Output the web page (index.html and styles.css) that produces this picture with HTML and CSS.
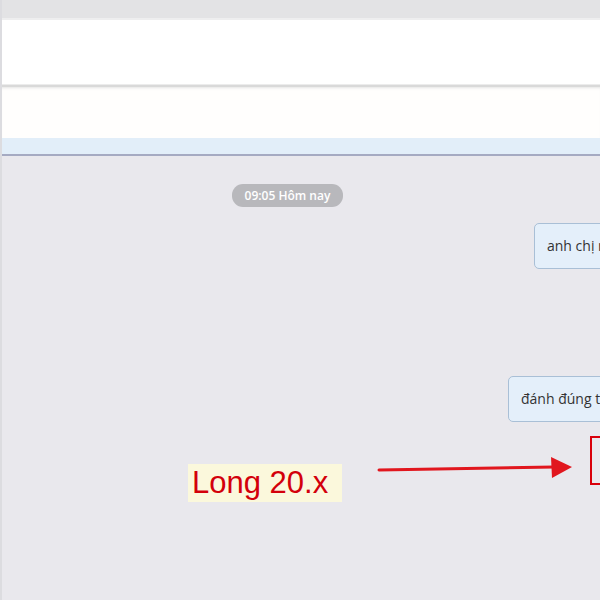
FILE: index.html
```html
<!DOCTYPE html>
<html lang="vi">
<head>
    <meta charset="UTF-8">
    <meta name="viewport" content="width=device-width, initial-scale=1.0">
    <title>Chat</title>
    <link rel="stylesheet" href="styles.css">
</head>
<body>
    <div class="app">
        <div class="topbar"></div>
        <div class="header"></div>
        <div class="subheader"></div>
        <div class="tabstrip"></div>

        <div class="chat">
            <div class="stamp-row">
                <span class="stamp">09:05 Hôm nay</span>
            </div>
            <div class="msg msg-first">
                <div class="bubble">anh chị nhập đúng tên giúp em</div>
            </div>
            <div class="msg msg-second">
                <div class="bubble">đánh đúng tên nhé</div>
            </div>

            <!-- annotation drawn over the screen -->
            <div class="note">Long 20.x</div>
            <svg class="arrow" width="210" height="36" viewBox="0 0 210 36">
                <line x1="7" y1="20" x2="182" y2="17" stroke="#e1161e" stroke-width="3" stroke-linecap="round"/>
                <polygon points="179,7 200,17 180,28" fill="#e1161e"/>
            </svg>
            <div class="mark"></div>
        </div>
    </div>
</body>
</html>
```

FILE: styles.css
```css
* {
    box-sizing: border-box;
}

html, body {
    margin: 0;
    height: 100%;
    overflow: hidden;
}

body {
    font-family: "Open Sans", "Noto Sans", sans-serif;
    color: #333;
    background-color: #e9e8ed;
}

.app {
    display: flex;
    flex-direction: column;
    height: 100%;
    border-left: 2px solid #dcdce0;
}

.topbar {
    height: 20px;
    background-color: #e3e3e5;
    border-bottom: 2px solid #eeeeef;
}

.header {
    height: 65px;
    background-color: #fff;
    border-bottom: 1px solid #ececec;
}

.subheader {
    height: 53px;
    background-color: #fffefd;
    border-top: 2px solid #d9d9d9;
    box-shadow: inset 0 3px 3px -2px #e4e4e4;
}

.tabstrip {
    height: 18px;
    background-color: #e2eef9;
    border-bottom: 2px solid #a5aac2;
}

.chat {
    position: relative;
    flex: 1;
    background-color: #e9e8ed;
}

.stamp-row {
    padding-top: 27px;
    padding-left: 230px;
}

.stamp {
    display: inline-block;
    width: 111px;
    height: 23px;
    line-height: 23px;
    text-align: center;
    font-size: 12px;
    font-weight: 600;
    color: #fff;
    background-color: #b8b8bc;
    border-radius: 11px;
}

.msg {
    white-space: nowrap;
}

.msg-first {
    margin-top: 16px;
    padding-left: 532px;
}

.msg-second {
    margin-top: 107px;
    padding-left: 506px;
}

.bubble {
    display: inline-block;
    height: 46px;
    line-height: 44px;
    padding: 0 12px;
    font-size: 14px;
    color: #333;
    background-color: #e4effa;
    border: 1px solid #a9bfd6;
    border-radius: 5px;
}

.note {
    position: absolute;
    left: 186px;
    top: 308px;
    width: 154px;
    height: 38px;
    padding-left: 4px;
    line-height: 38px;
    font-family: "Liberation Sans", Arial, sans-serif;
    font-size: 31px;
    color: #d3000b;
    background-color: #fbf8dc;
}

.arrow {
    position: absolute;
    left: 370px;
    top: 294px;
}

.mark {
    position: absolute;
    left: 588px;
    top: 280px;
    width: 40px;
    height: 49px;
    border: 2px solid #d9000b;
}
```
